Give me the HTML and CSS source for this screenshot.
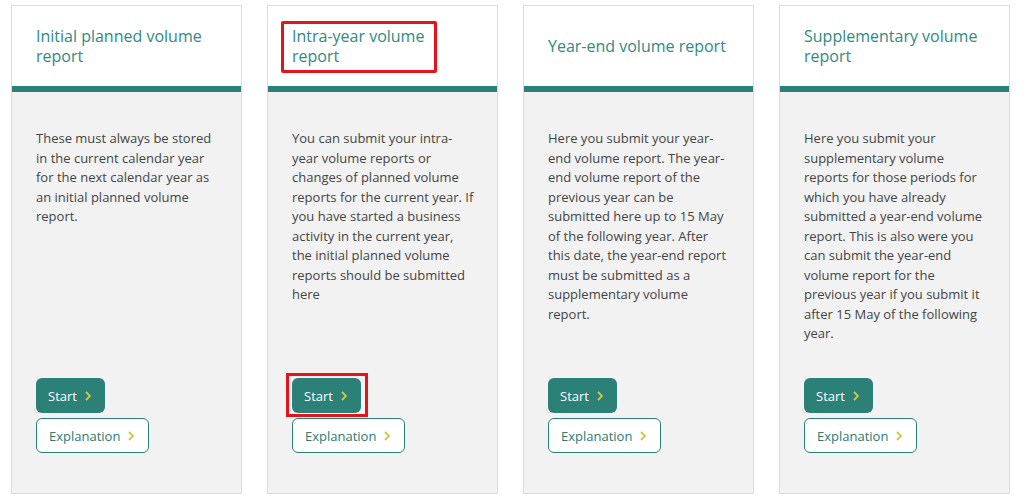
FILE: index.html
```html
<!DOCTYPE html>
<html lang="en">
<head>
  <meta charset="UTF-8" />
  <meta name="viewport" content="width=device-width, initial-scale=1.0" />
  <title>Volume reports</title>
  <link rel="stylesheet" href="styles.css">
</head>
<body>
  <main class="cards">
    <section class="card">
      <header class="card-head">
        <h2>Initial planned volume report</h2>
      </header>
      <div class="card-body">
        <p>These must always be stored in the current calendar year for the next calendar year as an initial planned volume report.</p>
        <div class="actions">
          <a class="btn btn-start" href="#">Start <svg class="chev" viewBox="0 0 6 10"><polyline points="1,1 5,5 1,9"/></svg></a>
          <a class="btn btn-outline" href="#">Explanation <svg class="chev" viewBox="0 0 6 10"><polyline points="1,1 5,5 1,9"/></svg></a>
        </div>
      </div>
    </section>

    <section class="card">
      <header class="card-head">
        <h2><span class="marked">Intra-year volume<br>report</span></h2>
      </header>
      <div class="card-body">
        <p>You can submit your intra-year volume reports or changes of planned volume reports for the current year. If you have started a business activity in the current year, the initial planned volume reports should be submitted here</p>
        <div class="actions">
          <a class="btn btn-start marked-btn" href="#">Start <svg class="chev" viewBox="0 0 6 10"><polyline points="1,1 5,5 1,9"/></svg></a>
          <a class="btn btn-outline" href="#">Explanation <svg class="chev" viewBox="0 0 6 10"><polyline points="1,1 5,5 1,9"/></svg></a>
        </div>
      </div>
    </section>

    <section class="card">
      <header class="card-head">
        <h2>Year-end volume report</h2>
      </header>
      <div class="card-body">
        <p>Here you submit your year-end volume report. The year-end volume report of the previous year can be submitted here up to 15 May of the following year. After this date, the year-end report must be submitted as a supplementary volume report.</p>
        <div class="actions">
          <a class="btn btn-start" href="#">Start <svg class="chev" viewBox="0 0 6 10"><polyline points="1,1 5,5 1,9"/></svg></a>
          <a class="btn btn-outline" href="#">Explanation <svg class="chev" viewBox="0 0 6 10"><polyline points="1,1 5,5 1,9"/></svg></a>
        </div>
      </div>
    </section>

    <section class="card">
      <header class="card-head">
        <h2>Supplementary volume report</h2>
      </header>
      <div class="card-body">
        <p>Here you submit your supplementary volume reports for those periods for which you have already submitted a year-end volume report. This is also were you can submit the year-end volume report for the previous year if you submit it after 15 May of the following year.</p>
        <div class="actions">
          <a class="btn btn-start" href="#">Start <svg class="chev" viewBox="0 0 6 10"><polyline points="1,1 5,5 1,9"/></svg></a>
          <a class="btn btn-outline" href="#">Explanation <svg class="chev" viewBox="0 0 6 10"><polyline points="1,1 5,5 1,9"/></svg></a>
        </div>
      </div>
    </section>
  </main>
</body>
</html>
```

FILE: styles.css
```css
body {
  margin: 0;
  padding: 5px 11px 8px;
  font-family: 'Open Sans', 'Noto Sans', sans-serif;
  background-color: #ffffff;
  color: #444444;
}
.cards {
  display: grid;
  grid-template-columns: repeat(4, 231px);
  column-gap: 25px;
  height: 489px;
}
.card {
  display: flex;
  flex-direction: column;
  border: 1px solid #dcdcdc;
  background-color: #f2f2f2;
}
.card-head {
  height: 80px;
  display: flex;
  align-items: center;
  padding: 0 24px;
  background-color: #ffffff;
  border-bottom: 6px solid #2b8078;
}
.card-head h2 {
  margin: 0;
  font-size: 16px;
  font-weight: 400;
  line-height: 20px;
  color: #2f8a82;
}
.marked {
  position: relative;
  display: inline-block;
}
.marked::after {
  content: '';
  position: absolute;
  top: -5px;
  bottom: -7px;
  left: -11px;
  right: -13px;
  border: 3px solid #e3141c;
  border-radius: 2px;
}
.card-body {
  flex: 1;
  display: flex;
  flex-direction: column;
  padding: 37px 21px 40px 24px;
}
.card-body p {
  margin: 0;
  font-size: 13px;
  line-height: 19.5px;
}
.actions {
  margin-top: auto;
  display: flex;
  flex-direction: column;
  align-items: flex-start;
  gap: 5px;
}
.btn {
  position: relative;
  box-sizing: border-box;
  display: inline-flex;
  align-items: center;
  height: 35px;
  padding: 0 14px 0 12px;
  border-radius: 6px;
  font-size: 13px;
  text-decoration: none;
}
.btn-start {
  background-color: #2b8078;
  color: #ffffff;
}
.btn-outline {
  background-color: #ffffff;
  border: 1px solid #2b8078;
  color: #2b7a73;
}
.chev {
  width: 6px;
  height: 10px;
  margin-left: 8px;
  fill: none;
  stroke: #d8c43a;
  stroke-width: 1.8;
}
.marked-btn::after {
  content: '';
  position: absolute;
  top: -5px;
  bottom: -4px;
  left: -6px;
  right: -7px;
  border: 3px solid #e3141c;
}
```
